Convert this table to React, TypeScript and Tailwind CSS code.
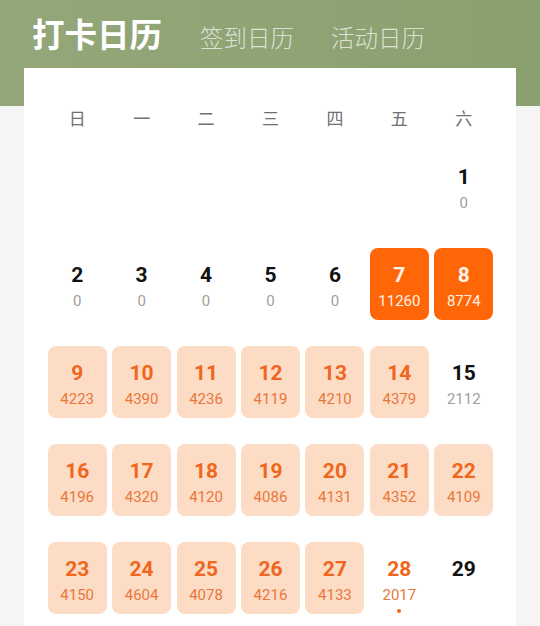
import React from "react";

type Cell = { d: number; c?: number; kind: "plain" | "solid" | "soft" | "today" | "none" } | null;

const rows: Cell[][] = [
  [null, null, null, null, null, null, { d: 1, c: 0, kind: "plain" }],
  [
    { d: 2, c: 0, kind: "plain" },
    { d: 3, c: 0, kind: "plain" },
    { d: 4, c: 0, kind: "plain" },
    { d: 5, c: 0, kind: "plain" },
    { d: 6, c: 0, kind: "plain" },
    { d: 7, c: 11260, kind: "solid" },
    { d: 8, c: 8774, kind: "solid" },
  ],
  [
    { d: 9, c: 4223, kind: "soft" },
    { d: 10, c: 4390, kind: "soft" },
    { d: 11, c: 4236, kind: "soft" },
    { d: 12, c: 4119, kind: "soft" },
    { d: 13, c: 4210, kind: "soft" },
    { d: 14, c: 4379, kind: "soft" },
    { d: 15, c: 2112, kind: "plain" },
  ],
  [
    { d: 16, c: 4196, kind: "soft" },
    { d: 17, c: 4320, kind: "soft" },
    { d: 18, c: 4120, kind: "soft" },
    { d: 19, c: 4086, kind: "soft" },
    { d: 20, c: 4131, kind: "soft" },
    { d: 21, c: 4352, kind: "soft" },
    { d: 22, c: 4109, kind: "soft" },
  ],
  [
    { d: 23, c: 4150, kind: "soft" },
    { d: 24, c: 4604, kind: "soft" },
    { d: 25, c: 4078, kind: "soft" },
    { d: 26, c: 4216, kind: "soft" },
    { d: 27, c: 4133, kind: "soft" },
    { d: 28, c: 2017, kind: "today" },
    { d: 29, kind: "none" },
  ],
];

const week = ["日", "一", "二", "三", "四", "五", "六"];

function DayCell({ cell }: { cell: Cell }) {
  if (!cell) return <div className="h-[72px]" />;
  const box =
    cell.kind === "solid"
      ? "bg-[#ff6608] rounded-[8px]"
      : cell.kind === "soft"
      ? "bg-[#fddcc6] rounded-[8px]"
      : "";
  const numColor =
    cell.kind === "solid"
      ? "text-[#fff4ea]"
      : cell.kind === "soft" || cell.kind === "today"
      ? "text-[#f0661c]"
      : "text-[#111111]";
  const cntColor =
    cell.kind === "solid"
      ? "text-[#fff1e4]"
      : cell.kind === "soft" || cell.kind === "today"
      ? "text-[#e9773a]"
      : "text-[#a0a0a0]";
  return (
    <div className="flex justify-center">
      <div className={`w-[59px] h-[72px] flex flex-col items-center pt-[15px] ${box}`}>
        <div className={`text-[21px] leading-[24px] font-bold ${numColor}`}>{cell.d}</div>
        {cell.c !== undefined && (
          <div className={`mt-[5px] text-[15px] leading-[18px] ${cntColor}`}>{cell.c}</div>
        )}
        {cell.kind === "today" && <div className="mt-[5px] w-[4px] h-[4px] rounded-full bg-[#f0661c]" />}
      </div>
    </div>
  );
}

export default function App() {
  return (
    <div
      className="w-[540px] h-[626px] overflow-hidden bg-[#f5f5f5]"
      style={{ fontFamily: "Roboto, 'Noto Sans CJK SC', sans-serif" }}
    >
      <div className="h-[106px] bg-gradient-to-r from-[#93a77a] to-[#8ba06f] pl-[32px] pt-[16px] flex items-baseline">
        <div
          className="text-[32.5px] leading-[34px] font-bold text-white"
          style={{ fontFamily: "'Noto Sans CJK SC', sans-serif" }}
        >
          打卡日历
        </div>
        <div
          className="ml-[38px] text-[23.5px] leading-[30px] font-light text-white/70"
          style={{ fontFamily: "'Noto Sans CJK SC', sans-serif" }}
        >
          签到日历
        </div>
        <div
          className="ml-[37px] text-[23.5px] leading-[30px] font-light text-white/70"
          style={{ fontFamily: "'Noto Sans CJK SC', sans-serif" }}
        >
          活动日历
        </div>
      </div>
      <div className="relative mx-[24px] -mt-[38px] bg-white pl-[21px] pr-[20px] pt-[36px] h-[600px]">
        <div className="grid grid-cols-7 h-[28px] items-center">
          {week.map((w) => (
            <div
              key={w}
              className="text-center text-[17px] text-[#707070]"
              style={{ fontFamily: "'Noto Sans CJK SC', sans-serif" }}
            >
              {w}
            </div>
          ))}
        </div>
        <div className="mt-[18px] flex flex-col gap-[26px]">
          {rows.map((r, i) => (
            <div key={i} className="grid grid-cols-7">
              {r.map((c, j) => (
                <DayCell key={j} cell={c} />
              ))}
            </div>
          ))}
        </div>
      </div>
    </div>
  );
}
